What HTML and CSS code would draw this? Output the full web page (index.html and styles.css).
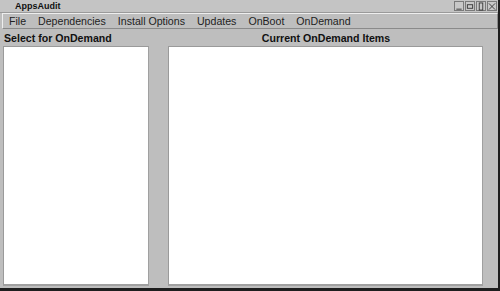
FILE: index.html
```html
<!DOCTYPE html>
<html>
<head>
    <title>AppsAudit</title>
    <link rel="stylesheet" href="styles.css">
</head>
<body>
    <div class="window">
        <div class="titlebar">
            <span class="title">AppsAudit</span>
            <div class="wm-buttons">
                <span class="wm-btn">
                    <svg width="9" height="9" viewBox="0 0 9 9"><path d="M1.5 7.5h6" stroke="#333" fill="none"/></svg>
                </span>
                <span class="wm-btn">
                    <svg width="9" height="9" viewBox="0 0 9 9"><rect x="1.5" y="2.5" width="6" height="4" stroke="#333" fill="none"/></svg>
                </span>
                <span class="wm-btn">
                    <svg width="9" height="9" viewBox="0 0 9 9"><rect x="2.5" y="0.5" width="4" height="8" stroke="#333" fill="none"/></svg>
                </span>
                <span class="wm-btn">
                    <svg width="9" height="9" viewBox="0 0 9 9"><path d="M1 1l7 7M8 1l-7 7" stroke="#333" fill="none"/></svg>
                </span>
            </div>
        </div>

        <div class="menubar">
            <span class="menu-item">File</span>
            <span class="menu-item">Dependencies</span>
            <span class="menu-item">Install Options</span>
            <span class="menu-item">Updates</span>
            <span class="menu-item">OnBoot</span>
            <span class="menu-item">OnDemand</span>
        </div>

        <div class="content">
            <div class="column left-col">
                <div class="label">Select for OnDemand</div>
                <div class="listbox"></div>
            </div>
            <div class="column right-col">
                <div class="label center">Current OnDemand Items</div>
                <div class="listbox"></div>
            </div>
        </div>
    </div>
</body>
</html>
```

FILE: styles.css
```css
body {
    margin: 0;
    background-color: #1e1e1e;
    font-family: "Liberation Sans", Arial, sans-serif;
}
.window {
    width: 498px;
    height: 288px;
    background-color: #bebebe;
    border-right: 2px solid #1e1e1e;
    border-bottom: 3px solid #1e1e1e;
    display: flex;
    flex-direction: column;
}
.titlebar {
    height: 12px;
    display: flex;
    align-items: center;
    justify-content: space-between;
    background-color: #c4c4c4;
    border-bottom: 1px solid #9a9a9a;
}
.title {
    font-size: 9px;
    font-weight: bold;
    color: #111;
    margin-left: 15px;
}
.wm-buttons {
    display: flex;
    margin-right: 1px;
}
.wm-btn {
    width: 10px;
    height: 10px;
    margin-left: 1px;
    border: 1px solid #7a7a7a;
    box-sizing: border-box;
    display: flex;
    align-items: center;
    justify-content: center;
    background-color: #c8c8c8;
}
.wm-btn svg {
    display: block;
}
.menubar {
    height: 14px;
    display: flex;
    align-items: center;
    margin: 0 0 0 2px;
    padding-left: 6px;
    border-top: 1px solid #eeeeee;
    border-left: 1px solid #eeeeee;
    border-bottom: 1px solid #8a8a8a;
    border-right: 1px solid #8a8a8a;
    font-size: 10.6px;
    color: #222;
}
.menu-item {
    margin-right: 12px;
}
.content {
    flex: 1;
    display: flex;
    gap: 19px;
    padding: 2px 15px 2px 3px;
}
.column {
    display: flex;
    flex-direction: column;
}
.left-col {
    width: 146px;
}
.right-col {
    flex: 1;
}
.label {
    font-size: 10.6px;
    font-weight: bold;
    color: #111;
    height: 14px;
    line-height: 14px;
    margin-left: 1px;
    margin-bottom: 1px;
}
.label.center {
    text-align: center;
}
.listbox {
    flex: 1;
    background-color: #ffffff;
    border-top: 1px solid #9a9a9a;
    border-left: 1px solid #9a9a9a;
    border-right: 1px solid #a0a0a0;
    border-bottom: 2px solid #a0a0a0;
}
```
